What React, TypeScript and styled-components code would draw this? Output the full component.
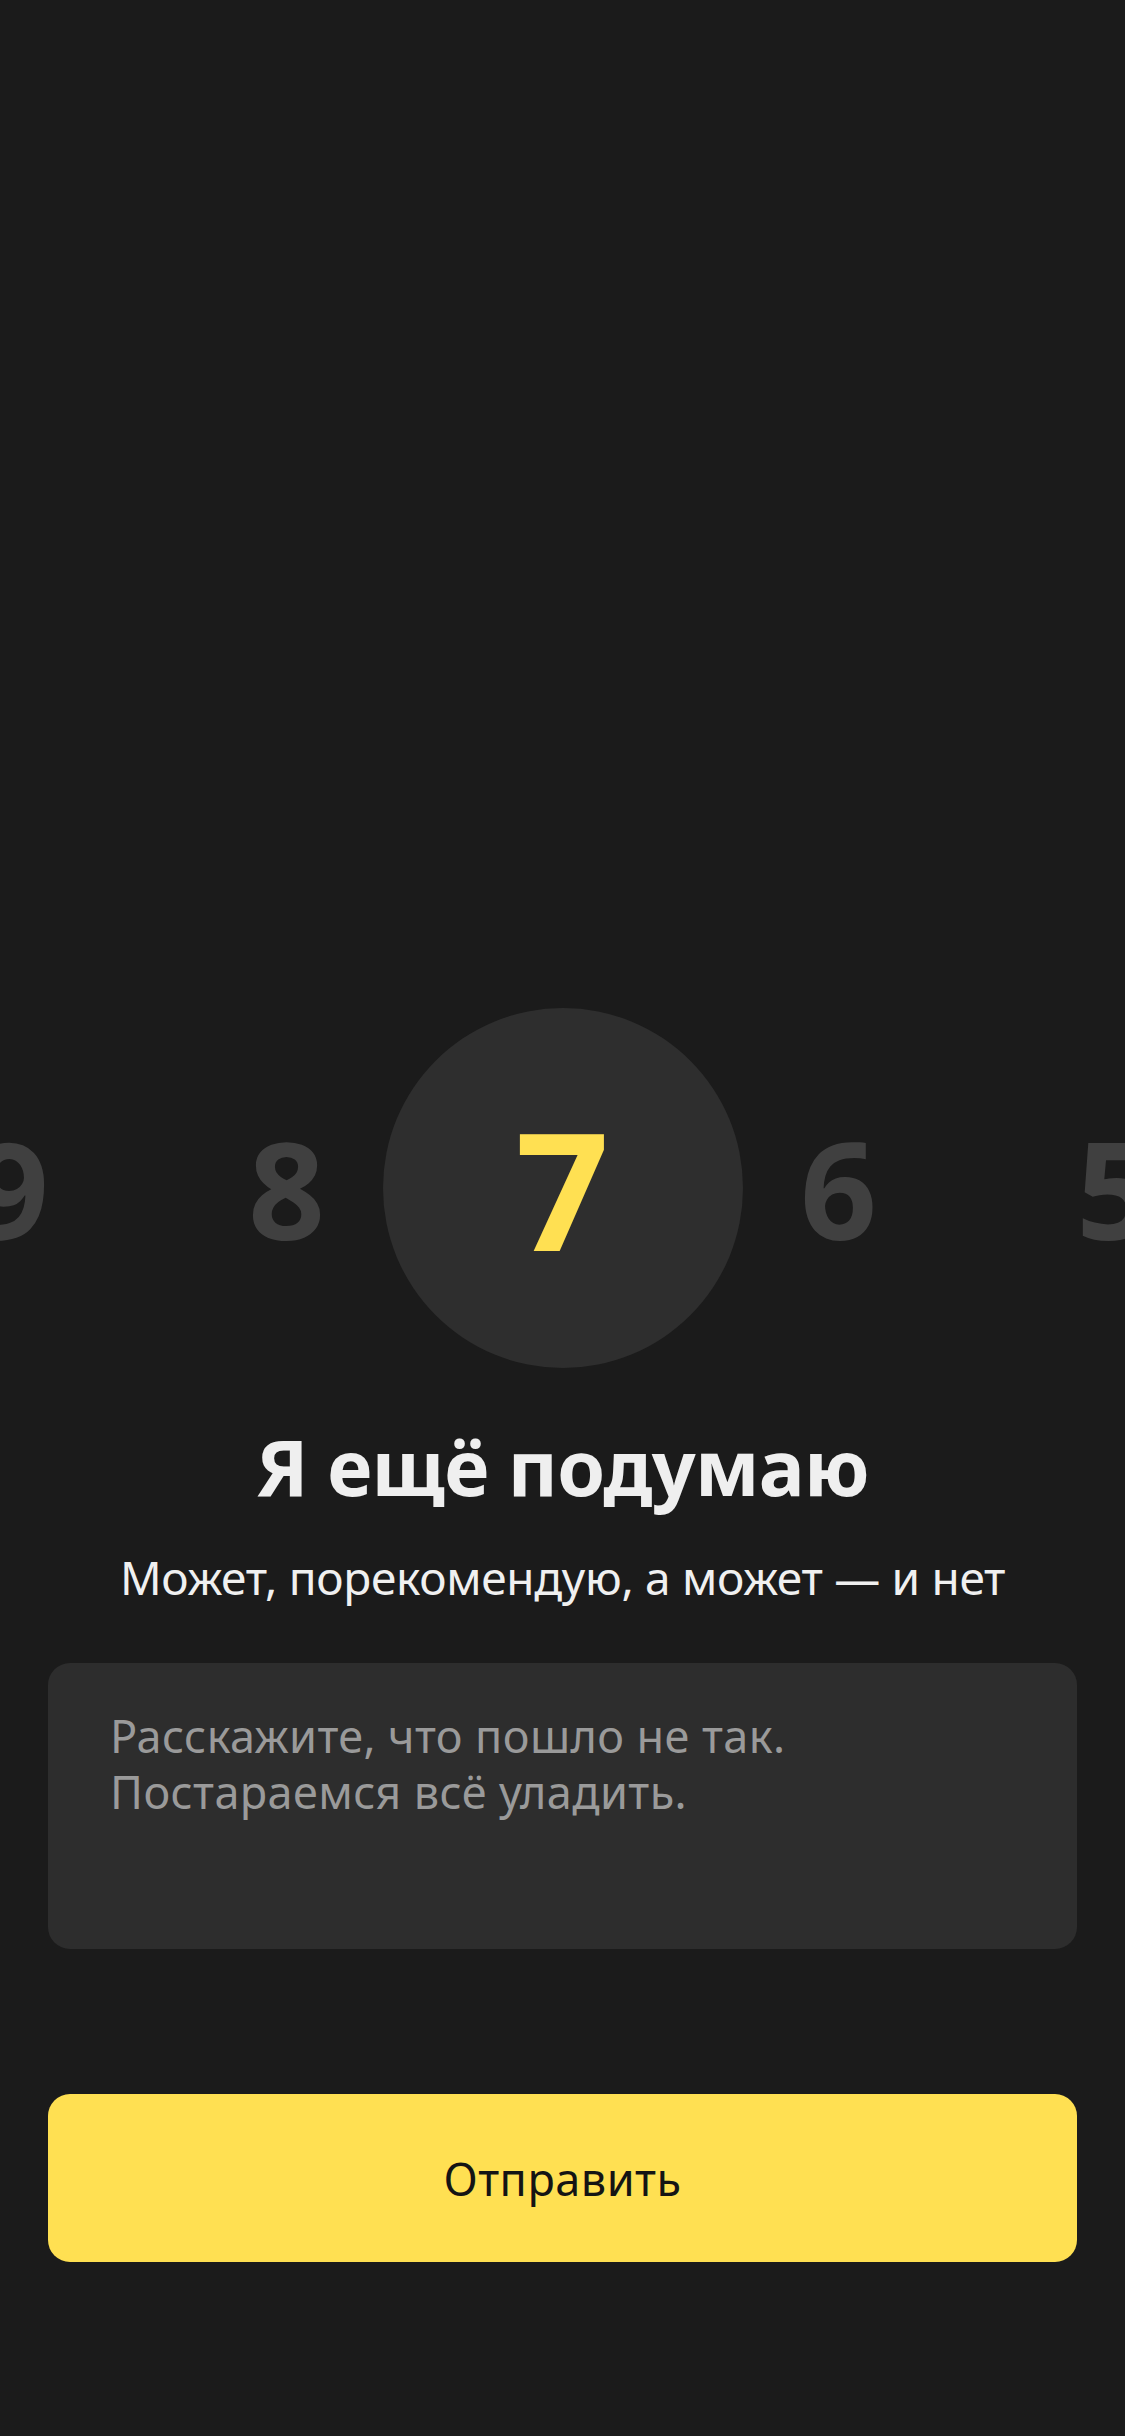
import React from "react";
import styled, { createGlobalStyle } from "styled-components";

const Global = createGlobalStyle`
  html, body {
    margin: 0;
    padding: 0;
    background: #1b1b1b;
  }
  body {
    font-family: "Noto Sans", "Open Sans", sans-serif;
  }
  * { box-sizing: border-box; }
`;

const Screen = styled.main`
  width: 1125px;
  min-height: 2436px;
  background: #1b1b1b;
  display: flex;
  flex-direction: column;
  align-items: center;
  overflow: hidden;
`;

const Picker = styled.div`
  margin-top: 1008px;
  width: 100%;
  height: 360px;
  display: flex;
  justify-content: center;
  align-items: center;
  overflow: hidden;
`;

const Slot = styled.div`
  flex: 0 0 276px;
  width: 276px;
  min-width: 0;
  height: 360px;
  display: flex;
  justify-content: center;
  align-items: center;
`;

const Digit = styled.div<{ $active?: boolean }>`
  flex: 0 0 auto;
  width: ${(p) => (p.$active ? "360px" : "auto")};
  height: ${(p) => (p.$active ? "360px" : "auto")};
  border-radius: 50%;
  background: ${(p) => (p.$active ? "#2e2e2e" : "transparent")};
  display: flex;
  justify-content: center;
  align-items: center;
  font-family: "Noto Sans", sans-serif;
  font-weight: 700;
  font-size: ${(p) => (p.$active ? "164px" : "134px")};
  line-height: 1;
  color: ${(p) => (p.$active ? "#ffe052" : "#404040")};
`;

const Title = styled.h1`
  margin: 60px 0 0;
  font-family: "Noto Sans", sans-serif;
  font-weight: 700;
  font-size: 77px;
  line-height: 77px;
  letter-spacing: -0.7px;
  color: #efefef;
  text-align: center;
`;

const Subtitle = styled.p`
  margin: 48px 0 0;
  font-family: "Noto Sans", sans-serif;
  font-weight: 400;
  font-size: 46px;
  line-height: 48px;
  letter-spacing: -0.3px;
  color: #f0f0f0;
  text-align: center;
  white-space: nowrap;
`;

const Field = styled.div`
  margin-top: 62px;
  width: 1029px;
  height: 286px;
  border-radius: 22px;
  background: #2d2d2d;
  padding: 45px 62px;
`;

const Placeholder = styled.div`
  font-family: "Noto Sans", sans-serif;
  font-size: 45px;
  line-height: 56px;
  letter-spacing: 0.4px;
  color: #9a9a9a;
`;

const SendButton = styled.button`
  margin-top: 145px;
  width: 1029px;
  height: 168px;
  border: none;
  border-radius: 22px;
  background: #ffe052;
  font-family: "Noto Sans", sans-serif;
  font-size: 45px;
  letter-spacing: 0.5px;
  color: #141414;
  display: flex;
  justify-content: center;
  align-items: center;
`;

const digits = [9, 8, 7, 6, 5];

export default function App() {
  return (
    <>
      <Global />
      <Screen>
        <Picker>
          {digits.map((d) => (
            <Slot key={d}>
              <Digit $active={d === 7}>{d}</Digit>
            </Slot>
          ))}
        </Picker>
        <Title>Я ещё подумаю</Title>
        <Subtitle>Может, порекомендую, а может — и нет</Subtitle>
        <Field>
          <Placeholder>
            Расскажите, что пошло не так.
            <br />
            Постараемся всё уладить.
          </Placeholder>
        </Field>
        <SendButton>Отправить</SendButton>
      </Screen>
    </>
  );
}
